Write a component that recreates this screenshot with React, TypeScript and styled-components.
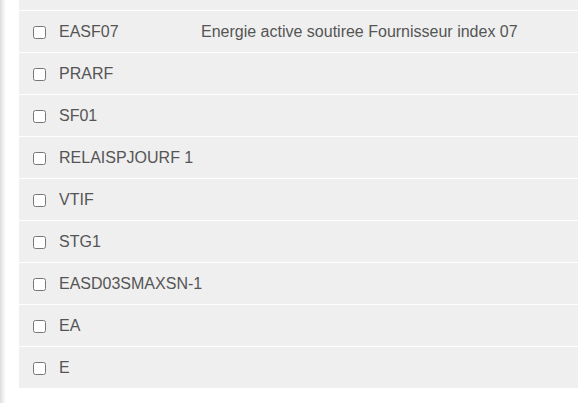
import React from "react";
import styled, { createGlobalStyle } from "styled-components";

const Global = createGlobalStyle`
  html, body { margin: 0; padding: 0; background: #fff; }
  body { font-family: Arial, "Liberation Sans", sans-serif; overflow: hidden; }
`;

const Page = styled.div`
  display: flex;
  height: 403px;
  overflow: hidden;
`;

const Edge = styled.div`
  width: 6px;
  flex: 0 0 6px;
  background: linear-gradient(to right, #dcdcdc, #f3f3f3 60%, #fff);
`;

const Viewport = styled.div`
  flex: 1;
  padding-left: 13px;
  overflow: hidden;
`;

const List = styled.ul`
  list-style: none;
  margin: -31px 0 0 0;
  padding: 0;
`;

const Row = styled.li<{ $first?: boolean }>`
  display: flex;
  align-items: center;
  height: 41px;
  background: #efefef;
  border-top: ${(p) => (p.$first ? "0" : "1px solid #fff")};
  font-size: 16px;
  color: #555;
`;

const Check = styled.input.attrs({ type: "checkbox" })`
  width: 13px;
  height: 13px;
  margin: 1px 13px 0 14px;
  flex: 0 0 13px;
`;

const Code = styled.span`
  width: 142px;
  flex: 0 0 142px;
  white-space: nowrap;
`;

const Desc = styled.span`
  white-space: nowrap;
`;

const rows: { code: string; desc?: string }[] = [
  { code: "EASF07", desc: "Energie active soutiree Fournisseur index 07" },
  { code: "PRARF" },
  { code: "SF01" },
  { code: "RELAISPJOURF 1" },
  { code: "VTIF" },
  { code: "STG1" },
  { code: "EASD03SMAXSN-1" },
  { code: "EA" },
  { code: "E" },
];

export default function App() {
  return (
    <>
      <Global />
      <Page>
        <Edge />
        <Viewport>
          <List>
            <Row $first aria-hidden="true" />
            {rows.map((r) => (
              <Row key={r.code}>
                <Check />
                <Code>{r.code}</Code>
                {r.desc && <Desc>{r.desc}</Desc>}
              </Row>
            ))}
          </List>
        </Viewport>
      </Page>
    </>
  );
}
